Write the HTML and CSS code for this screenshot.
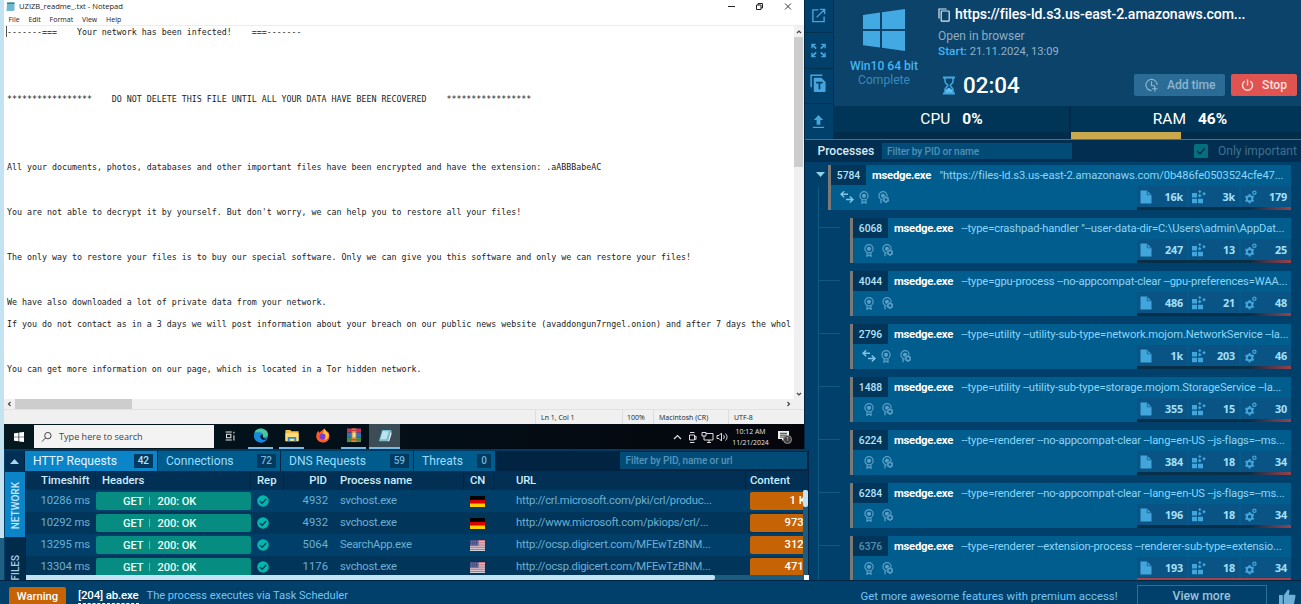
FILE: index.html
```html
<!DOCTYPE html>
<html lang="en">
<head>
<meta charset="utf-8">
<title>Task analysis</title>
<link rel="stylesheet" href="styles.css">
</head>
<body>
<svg class="defs" aria-hidden="true">
  <symbol id="i-cert" viewBox="0 0 10 13"><circle cx="5" cy="4.8" r="4.1" fill="none" stroke="currentColor" stroke-width="1.2"/><circle cx="5" cy="4.8" r="2.1" fill="currentColor"/><path d="M3 8.5V12.3L5 11L7 12.3V8.5" fill="none" stroke="currentColor" stroke-width="1.2"/></symbol>
  <symbol id="i-certgear" viewBox="0 0 12 13"><circle cx="5" cy="4.8" r="4.1" fill="none" stroke="currentColor" stroke-width="1.2"/><circle cx="5" cy="4.8" r="2.1" fill="currentColor"/><path d="M3 8.5V12.3" stroke="currentColor" stroke-width="1.3"/><circle cx="8" cy="8.6" r="3.3" fill="#005d8d"/><circle cx="8" cy="8.6" r="2.1" fill="none" stroke="currentColor" stroke-width="1.4"/><path d="M8 5.3V6.5M8 10.7V11.9M5.2 7L6.2 7.6M9.8 9.6L10.8 10.2M5.2 10.2L6.2 9.6M9.8 7.6L10.8 7" stroke="currentColor" stroke-width="1.4"/></symbol>
  <symbol id="i-net" viewBox="0 0 14 12"><path d="M4.2 .3L1 3.3L4.2 6.3M1 3.3H8M9.8 5.5L13 8.5L9.8 11.5M13 8.5H6" fill="none" stroke="currentColor" stroke-width="1.4"/></symbol>
  <symbol id="i-file" viewBox="0 0 12 14"><path d="M.5 .5H7L11.5 5V13.5H.5Z" fill="currentColor"/><path d="M7.3 .8V4.8H11.3" fill="none" stroke="#0b5485" stroke-width=".7"/></symbol>
  <symbol id="i-reg" viewBox="0 0 14 14"><path d="M0 3H5V7.5H0ZM0 8.7H5V13.3H0ZM6 8.7H11V13.3H6ZM7.7 3.8L9.6 5.7L7.7 7.6L5.8 5.7ZM7.8 0L9.4 1.6L7.8 3.2L6.2 1.6ZM12 2L13.8 3.8L12 5.6L10.2 3.8Z" fill="currentColor"/></symbol>
  <symbol id="i-gears" viewBox="0 0 12 14"><circle cx="4.6" cy="8.8" r="2.8" fill="none" stroke="currentColor" stroke-width="2"/><path d="M4.6 4V5.8M4.6 11.8V13.6M.4 6.4L2 7.3M7.2 10.3L8.8 11.2M.4 11.2L2 10.3M7.2 7.3L8.8 6.4" stroke="currentColor" stroke-width="1.8"/><circle cx="9.4" cy="2.7" r="1.6" fill="none" stroke="currentColor" stroke-width="1.3"/></symbol>
  <symbol id="i-ok" viewBox="0 0 12 12"><circle cx="6" cy="6" r="5.8" fill="#06b5ab"/><path d="M3 6.2L5.2 8.3L9.2 4" fill="none" stroke="#033f64" stroke-width="1.3"/></symbol>
  <symbol id="i-de" viewBox="0 0 15 11"><path d="M0 0H15V4H0Z" fill="#000"/><path d="M0 4H15V7.5H0Z" fill="#dc0000"/><path d="M0 7.5H15V11H0Z" fill="#ffce00"/></symbol>
  <symbol id="i-us" viewBox="0 0 15 11"><path d="M0 0H15V11H0Z" fill="#d3cfd9"/><path d="M0 .6H15M0 2.8H15M0 5H15M0 7.2H15M0 9.4H15" stroke="#bd5c68" stroke-width=".9"/><path d="M0 0H8.5V5.6H0Z" fill="#4a5184"/><path d="M1 1.5H8M1 3H8M1 4.5H8" stroke="#8c91b5" stroke-width=".5" stroke-dasharray="1 1"/></symbol>
</svg>

<div class="app">
  <div class="upper">
    <div class="edge"></div>
    <main class="left">
      <section class="vm">
        <div class="vm-title">
          <svg class="np-icon" viewBox="0 0 9 9"><path d="M1 .5H8.5V8L7.5 9H.5Z" fill="#6db9d0"/><path d="M1 .5H8.5V2H1Z" fill="#3d7f96"/></svg>
          <span class="vm-name">UZIZB_readme_.txt - Notepad</span>
          <svg class="win-ctl" viewBox="0 0 66 9"><path d="M0 4.5H7" stroke="#222"/><path d="M28.5 3H33V7.5H28.5ZM30 3V1.5H34.5V6H33" fill="none" stroke="#222"/><path d="M57 1.5L63 7.5M63 1.5L57 7.5" stroke="#222" stroke-width=".9"/></svg>
        </div>
        <div class="vm-menu"><span>File</span><span>Edit</span><span>Format</span><span>View</span><span>Help</span></div>
        <div class="vm-body">
          <div class="caret"></div>
          <pre class="note">-------===    Your network has been infected!    ===-------





*****************    DO NOT DELETE THIS FILE UNTIL ALL YOUR DATA HAVE BEEN RECOVERED    *****************





All your documents, photos, databases and other important files have been encrypted and have the extension: .aABBBabeAC



You are not able to decrypt it by yourself. But don't worry, we can help you to restore all your files!



The only way to restore your files is to buy our special software. Only we can give you this software and only we can restore your files!



We have also downloaded a lot of private data from your network.

If you do not contact as in a 3 days we will post information about your breach on our public news website (avaddongun7rngel.onion) and after 7 days the whol



You can get more information on our page, which is located in a Tor hidden network.</pre>
          <div class="vbar">
            <svg viewBox="0 0 10 11"><path d="M3 7L5 5L7 7" fill="none" stroke="#444" stroke-width="1.2"/></svg>
            <div class="vthumb"></div>
            <svg class="down" viewBox="0 0 10 11"><path d="M3 5L5 7L7 5" fill="none" stroke="#444" stroke-width="1.2"/></svg>
          </div>
        </div>
        <div class="hbar">
          <svg viewBox="0 0 11 10"><path d="M6.5 3L4.5 5L6.5 7" fill="none" stroke="#444" stroke-width="1.2"/></svg>
          <div class="hthumb"></div>
          <svg class="right" viewBox="0 0 11 10"><path d="M4.5 3L6.5 5L4.5 7" fill="none" stroke="#444" stroke-width="1.2"/></svg>
        </div>
        <div class="vm-status"><span class="s1">Ln 1, Col 1</span><span class="s2">100%</span><span class="s3">Macintosh (CR)</span><span class="s4">UTF-8</span></div>
        <div class="taskbar">
          <div class="tb-start"><svg viewBox="0 0 10 10"><path d="M0 1.3L4.5 .7V4.7H0ZM5.2 .6L10 0V4.7H5.2ZM0 5.3H4.5V9.3L0 8.7ZM5.2 5.3H10V10L5.2 9.4Z" fill="#fff"/></svg></div>
          <div class="tb-search"><svg viewBox="0 0 12 12"><circle cx="7.5" cy="4.5" r="3.5" fill="none" stroke="#333"/><path d="M5 7L1 11" stroke="#333"/></svg><span>Type here to search</span></div>
          <div class="tb-app"><svg class="tv" viewBox="0 0 16 16"><path d="M3 3.5H10M3 12.5H10M4 6H9V10H4ZM12.5 3V5M12.5 7V13" fill="none" stroke="#e8e8e8" stroke-width="1.2"/></svg></div>
          <div class="tb-app on"><svg viewBox="0 0 16 16"><circle cx="8" cy="8" r="7.6" fill="#1679cf"/><path d="M1 5C3-1 13-1 15.2 5.5C16 10 12 10.500 10 9C9 6 5 4 1 5Z" fill="#43c99a"/><path d="M.5 8C1 4 9 3 10 7C7 7 6 10 9 12C11 13 13 12.500 14.500 11.500C11 18 .5 16 .5 8Z" fill="#1589dc"/><path d="M10 7C7 7 6.500 10 9 12C11 13 13 12.500 14.500 11.500C12 12 10 11 9.800 9Z" fill="#03101c"/></svg></div>
          <div class="tb-app on"><svg viewBox="0 0 16 16"><path d="M1 2H6L7.500 3.500H15V14H1Z" fill="#f2c14b"/><path d="M1 5.500H15V14H1Z" fill="#fbdc7a"/><path d="M3.500 9.500H12.500V14H10.500V11.500H5.500V14H3.500Z" fill="#2d8cd0"/></svg></div>
          <div class="tb-app"><svg viewBox="0 0 16 16"><path d="M8 15.500C3 15.500 .5 12 .8 8C1 5.500 2 4 3 2.800L4 5C6 2.500 8 3 9 .5C11 2 11 3.500 12 4.500L13 3.500C17 9 14 15.500 8 15.500Z" fill="#fb5b27"/><path d="M9 .5C11 2 12 4.500 14 6C15 10 12 13 9 12C12 9 9 6 7 6C9 4 9 2 9 .5Z" fill="#ffbe2e"/><circle cx="7.500" cy="9" r="3.200" fill="#7a3bd0"/></svg></div>
          <div class="tb-app on"><svg viewBox="0 0 16 16"><path d="M.5 .5H15.500V5H.5Z" fill="#a53a7b"/><path d="M.5 5H15.500V10H.5Z" fill="#3671b4"/><path d="M.5 10H15.500V15H.5Z" fill="#3b9a4d"/><path d="M5.500 .5H10.500V15H5.500Z" fill="#d48a38"/><path d="M6.500 5H9.500V10H6.500Z" fill="#f5dc9c"/><path d="M.5 2.500H15.500M.5 12.500H15.500" stroke="#cc3440" stroke-width="1.200"/></svg></div>
          <div class="tb-app on sel"><svg viewBox="0 0 16 16"><path d="M5 2H14.500L11 14H1.500Z" fill="#78bed0"/><path d="M5.500 3.500H12L9.500 12H3Z" fill="#bce4ec"/><path d="M11 14L14.500 2L15 6L12.500 14Z" fill="#e8f4f6"/></svg></div>
          <div class="tray">
            <svg viewBox="0 0 60 14"><path d="M2 9L5.500 5.500L9 9" fill="none" stroke="#ddd" stroke-width="1.200"/><path d="M17.500 5H22.500V10H17.500ZM22.500 7L24 6V9.500L22.500 8.500M18 2.500H22.500M18 12.500H22.500" fill="none" stroke="#ddd"/><path d="M30 2.500H34V6H30ZM34 3.500H41V10H32V6M35 12.500H39M37 10V12" fill="none" stroke="#ddd"/><path d="M45 5.500H47L49.500 3V11L47 8.500H45ZM51.500 5C52.500 6 52.500 8 51.500 9M53.500 3.500C55.500 5.500 55.500 8.500 53.500 10.500" fill="none" stroke="#ddd"/></svg>
            <div class="clock"><span>10:12 AM</span><span>11/21/2024</span></div>
            <div class="action"><svg viewBox="0 0 12 12"><path d="M0 0H11V8H6L4 10V8H0Z" fill="#eee"/><path d="M2 2.300H9M2 4.200H9M2 6.100H9" stroke="#111" stroke-width=".8"/></svg><span>1</span></div>
          </div>
        </div>
      </section>

      <section class="net">
        <div class="tabs">
          <div class="fold"><svg viewBox="0 0 9 5"><path d="M0 5L4.500 0L9 5Z" fill="#a8d8f5"/></svg></div>
          <div class="tab t1 active"><span>HTTP Requests</span><b>42</b></div>
          <div class="tab t2"><span>Connections</span><b>72</b></div>
          <div class="tab t3"><span>DNS Requests</span><b>59</b></div>
          <div class="tab t4"><span>Threats</span><b>0</b></div>
          <div class="net-filter">Filter by PID, name or url</div>
        </div>
        <div class="net-body">
          <div class="side"><div class="side-tab cur"><span>NETWORK</span></div><div class="side-tab"><span>FILES</span></div></div>
          <div class="table">
            <div class="row head"><span class="c-time">Timeshift</span><span class="c-head">Headers</span><span class="c-rep">Rep</span><span class="c-pid">PID</span><span class="c-proc">Process name</span><span class="c-cn">CN</span><span class="c-url">URL</span><span class="c-cont">Content</span></div>
            <div class="scroller">
              <div class="rows">
                <div class="row"><span class="c-time">10286 ms</span><span class="c-head"><span class="pill"><i>GET</i><em></em><i>200: OK</i></span></span><span class="c-rep"><svg><use href="#i-ok"/></svg></span><span class="c-pid">4932</span><span class="c-proc">svchost.exe</span><span class="c-cn"><svg><use href="#i-de"/></svg></span><span class="c-url">http://crl.microsoft.com/pki/crl/produc...</span><span class="c-cont"><span class="size kb">1 K</span></span></div>
                <div class="row alt"><span class="c-time">10292 ms</span><span class="c-head"><span class="pill"><i>GET</i><em></em><i>200: OK</i></span></span><span class="c-rep"><svg><use href="#i-ok"/></svg></span><span class="c-pid">4932</span><span class="c-proc">svchost.exe</span><span class="c-cn"><svg><use href="#i-de"/></svg></span><span class="c-url">http://www.microsoft.com/pkiops/crl/...</span><span class="c-cont"><span class="size">973</span></span></div>
                <div class="row"><span class="c-time">13295 ms</span><span class="c-head"><span class="pill"><i>GET</i><em></em><i>200: OK</i></span></span><span class="c-rep"><svg><use href="#i-ok"/></svg></span><span class="c-pid">5064</span><span class="c-proc">SearchApp.exe</span><span class="c-cn"><svg><use href="#i-us"/></svg></span><span class="c-url">http://ocsp.digicert.com/MFEwTzBNM...</span><span class="c-cont"><span class="size">312</span></span></div>
                <div class="row alt"><span class="c-time">13304 ms</span><span class="c-head"><span class="pill"><i>GET</i><em></em><i>200: OK</i></span></span><span class="c-rep"><svg><use href="#i-ok"/></svg></span><span class="c-pid">1176</span><span class="c-proc">svchost.exe</span><span class="c-cn"><svg><use href="#i-us"/></svg></span><span class="c-url">http://ocsp.digicert.com/MFEwTzBNM...</span><span class="c-cont"><span class="size">471</span></span></div>
              </div>
              <div class="track-v"><div></div></div>
            </div>
            <div class="track-h"><div class="h-thumb"></div><div class="corner"></div></div>
          </div>
        </div>
      </section>
    </main>

    <aside class="right-panel">
      <div class="overview">
        <div class="tools">
          <div><svg viewBox="0 0 16 16"><path d="M8 2H2V14.500H14V9M9.500 1.500H14.500V6.500M14.500 1.500L6 10" fill="none" stroke="#45a5dc" stroke-width="1.500"/></svg></div>
          <div><svg viewBox="0 0 16 16"><path d="M1 5.500V1.500H5M11 1.500H15V5.500M1 10.500V14.500H5M11 14.500H15V10.500" fill="none" stroke="#45a5dc" stroke-width="1.500"/><path d="M1.500 2L5.500 6M14.500 2L10.500 6M1.500 14L5.500 10M14.500 14L10.500 10" stroke="#45a5dc" stroke-width="2"/></svg></div>
          <div><svg class="big" viewBox="0 0 18 20"><path d="M1.200 14V1.200H13" fill="none" stroke="#45a5dc" stroke-width="1.600"/><path d="M4 5Q4 4 5 4H12L16.500 8.500V18Q16.500 19 15.500 19H5Q4 19 4 18Z" fill="#45a5dc"/><path d="M6.500 9H13.500M10 9V16" stroke="#004068" stroke-width="1.800"/></svg></div>
          <div><svg viewBox="0 0 14 16"><path d="M7 1L12 6.500H9V11.500H5V6.500H2Z" fill="#45a5dc"/><path d="M1 14.300H13" stroke="#45a5dc" stroke-width="1.300"/></svg></div>
        </div>
        <div class="info-col">
          <div class="info">
            <div class="os">
              <svg viewBox="0 0 42 42"><path d="M0 6L17 3.600V20H0ZM19 3.300L42 0V20H19ZM0 22H17V38.500L0 36.200ZM19 22H42V42L19 38.800Z" fill="#42a9e2"/></svg>
              <div class="os-name">Win10 64 bit</div>
              <div class="os-state">Complete</div>
            </div>
            <div class="task">
              <div class="task-url"><svg viewBox="0 0 12 14"><path d="M1 10.500V1H8.500" fill="none" stroke="#dcecf6" stroke-width="1.200"/><rect x="3.200" y="3" width="8" height="10.200" rx=".8" fill="none" stroke="#dcecf6" stroke-width="1.200"/></svg><span>https://files-ld.s3.us-east-2.amazonaws.com...</span></div>
              <div class="task-open">Open in browser</div>
              <div class="task-start"><b>Start:</b> 21.11.2024, 13:09</div>
              <div class="task-ctl">
                <svg class="glass" viewBox="0 0 12 18"><path d="M0 1H12M0 17H12" stroke="#42a9e2" stroke-width="2"/><path d="M2 1.500V5C2 7 4.800 8 4.800 9S2 11 2 13V16.500H10V13C10 11 7.200 10 7.200 9S10 7 10 5V1.500" fill="none" stroke="#42a9e2" stroke-width="1.500"/><path d="M2.500 16V13.500L6 11L9.500 13.500V16Z" fill="#5bc0f5"/></svg>
                <span class="timer">02:04</span>
                <div class="btn add"><svg viewBox="0 0 15 15"><path d="M13 7A6 6 0 1 0 7 13" fill="none" stroke="#8cb4cd" stroke-width="1.300"/><path d="M7 3V7.500L10.500 8M10.500 8V14M7.500 11H13.500" fill="none" stroke="#8cb4cd" stroke-width="1.300"/></svg><span>Add time</span></div>
                <div class="btn stop"><svg viewBox="0 0 14 14"><path d="M4 2.300A5.400 5.400 0 1 0 10 2.300M7 .5V7" fill="none" stroke="#ffd9d9" stroke-width="1.500"/></svg><span>Stop</span></div>
              </div>
            </div>
          </div>
          <div class="meters">
            <div class="meter cpu"><p>CPU<b>0%</b></p><div class="load"></div></div>
            <div class="meter ram"><p>RAM<b>46%</b></p><div class="load"><div></div></div></div>
          </div>
        </div>
      </div>
      <div class="proc-head"><span class="ttl">Processes</span><div class="proc-filter">Filter by PID or name</div><svg viewBox="0 0 14 14"><rect width="14" height="14" rx="1.500" fill="#056f80"/><path d="M3 7L6 9.800L11 4.300" fill="none" stroke="#022e51" stroke-width="1.500"/></svg><span class="imp">Only important</span></div>
      <div class="procs">
        <div class="parent">
          <svg class="open" viewBox="0 0 9 5"><path d="M0 0H9L4.500 5Z" fill="#8ed4e8"/></svg>
          <div class="proc"><div class="p-top"><span class="pid">5784</span><b>msedge.exe</b><span class="cmd q">"https://files-ld.s3.us-east-2.amazonaws.com/0b486fe0503524cfe47...</span></div><div class="p-bot"><svg class="n"><use href="#i-net"/></svg><svg class="c"><use href="#i-cert"/></svg><svg class="g"><use href="#i-certgear"/></svg><div class="stats"><div><svg><use href="#i-file"/></svg>16k</div><div><svg><use href="#i-reg"/></svg>3k</div><div><svg><use href="#i-gears"/></svg>179</div></div></div></div>
        </div>
        <div class="kids">
          <div class="kid"><div class="proc"><div class="p-top"><span class="pid">6068</span><b>msedge.exe</b><span class="cmd k1">--type=crashpad-handler "--user-data-dir=C:\Users\admin\AppDat...</span></div><div class="p-bot"><svg class="c"><use href="#i-cert"/></svg><svg class="g"><use href="#i-certgear"/></svg><div class="stats"><div><svg><use href="#i-file"/></svg>247</div><div><svg><use href="#i-reg"/></svg>13</div><div><svg><use href="#i-gears"/></svg>25</div></div></div></div></div>
          <div class="kid"><div class="proc"><div class="p-top"><span class="pid">4044</span><b>msedge.exe</b><span class="cmd k2">--type=gpu-process --no-appcompat-clear --gpu-preferences=WAA...</span></div><div class="p-bot"><svg class="c"><use href="#i-cert"/></svg><svg class="g"><use href="#i-certgear"/></svg><div class="stats"><div><svg><use href="#i-file"/></svg>486</div><div><svg><use href="#i-reg"/></svg>21</div><div><svg><use href="#i-gears"/></svg>48</div></div></div></div></div>
          <div class="kid"><div class="proc"><div class="p-top"><span class="pid">2796</span><b>msedge.exe</b><span class="cmd k3">--type=utility --utility-sub-type=network.mojom.NetworkService --la...</span></div><div class="p-bot"><svg class="n"><use href="#i-net"/></svg><svg class="c"><use href="#i-cert"/></svg><svg class="g"><use href="#i-certgear"/></svg><div class="stats"><div><svg><use href="#i-file"/></svg>1k</div><div><svg><use href="#i-reg"/></svg>203</div><div><svg><use href="#i-gears"/></svg>46</div></div></div></div></div>
          <div class="kid"><div class="proc"><div class="p-top"><span class="pid">1488</span><b>msedge.exe</b><span class="cmd k4">--type=utility --utility-sub-type=storage.mojom.StorageService --la...</span></div><div class="p-bot"><svg class="c"><use href="#i-cert"/></svg><svg class="g"><use href="#i-certgear"/></svg><div class="stats"><div><svg><use href="#i-file"/></svg>355</div><div><svg><use href="#i-reg"/></svg>15</div><div><svg><use href="#i-gears"/></svg>30</div></div></div></div></div>
          <div class="kid"><div class="proc"><div class="p-top"><span class="pid">6224</span><b>msedge.exe</b><span class="cmd k5">--type=renderer --no-appcompat-clear --lang=en-US --js-flags=--ms...</span></div><div class="p-bot"><svg class="c"><use href="#i-cert"/></svg><svg class="g"><use href="#i-certgear"/></svg><div class="stats"><div><svg><use href="#i-file"/></svg>384</div><div><svg><use href="#i-reg"/></svg>18</div><div><svg><use href="#i-gears"/></svg>34</div></div></div></div></div>
          <div class="kid"><div class="proc"><div class="p-top"><span class="pid">6284</span><b>msedge.exe</b><span class="cmd k5">--type=renderer --no-appcompat-clear --lang=en-US --js-flags=--ms...</span></div><div class="p-bot"><svg class="c"><use href="#i-cert"/></svg><svg class="g"><use href="#i-certgear"/></svg><div class="stats"><div><svg><use href="#i-file"/></svg>196</div><div><svg><use href="#i-reg"/></svg>18</div><div><svg><use href="#i-gears"/></svg>34</div></div></div></div></div>
          <div class="kid"><div class="proc"><div class="p-top"><span class="pid dim">6376</span><b>msedge.exe</b><span class="cmd k6">--type=renderer --extension-process --renderer-sub-type=extensio...</span></div><div class="p-bot"><svg class="c"><use href="#i-cert"/></svg><svg class="g"><use href="#i-certgear"/></svg><div class="stats hot"><div><svg><use href="#i-file"/></svg>193</div><div><svg><use href="#i-reg"/></svg>18</div><div><svg><use href="#i-gears"/></svg>34</div></div></div></div></div>
        </div>
      </div>
    </aside>
  </div>

  <footer class="foot">
    <span class="warn">Warning</span>
    <span class="f-proc">[204] ab.exe</span>
    <span class="f-msg">The process executes via Task Scheduler</span>
    <span class="f-promo">Get more awesome features with premium access!</span>
    <span class="f-more">View more</span>
    <svg class="thumb" viewBox="0 0 18 16"><path d="M0 6H4V16H0ZM5 6.500L9.500 0Q11.500 .5 11 2.500L10.300 5.500H16Q17.500 5.500 17.500 7L16 14.500Q15.700 16 14 16H5Z" fill="#6fb0d8"/></svg>
  </footer>
</div>
</body>
</html>
```

FILE: styles.css
```css
* { box-sizing: border-box; }
body { margin: 0; font-family: Roboto, sans-serif; font-size: 12px; background: #00406b; overflow: hidden; }
svg { display: block; flex: none; }
.defs { position: absolute; width: 0; height: 0; }
i, em { font-style: normal; }
p { margin: 0; }

.app { width: 1301px; height: 604px; display: flex; flex-direction: column; overflow: hidden; }
.upper { display: flex; height: 580px; overflow: hidden; background: #00406a; }
.edge { width: 4px; background: linear-gradient(#c3e3f3 538px, #1f5f82 538px); }
.left { width: 801px; position: relative; z-index: 1; }

/* remote desktop */
.vm { height: 449px; border-right: 1px solid #022742; background: #fff; display: flex; flex-direction: column; font-family: "Open Sans", "Noto Sans", sans-serif; color: #222; }
.vm-title { height: 13px; display: flex; align-items: center; padding-left: 2px; }
.np-icon { width: 9px; height: 9px; margin-right: 4px; }
.vm-name { font-size: 7.6px; width: 110px; line-height: 13px; white-space: nowrap; }
.win-ctl { width: 66px; height: 9px; margin-left: auto; margin-right: 10px; }
.vm-menu { height: 13px; display: flex; gap: 8.8px; padding-left: 4.5px; font-size: 7px; line-height: 13px; border-bottom: 1px solid #ededed; }
.vm-body { height: 373px; display: flex; }
.caret { width: 1px; height: 11px; margin-left: 2px; background: #555; }
.note { margin: 0; flex: 1; min-width: 0; padding-top: 1px; font: 8.3px/11.24px "DejaVu Sans Mono", monospace; letter-spacing: -0.002px; color: #222; overflow: hidden; text-indent: 0; }
.vbar { width: 10px; background: #f0f0f0; display: flex; flex-direction: column; }
.vbar svg { width: 10px; height: 11px; }
.vthumb { height: 130px; background: #cdcdcd; margin-right: 1px; }
.vbar .down { margin-top: auto; }
.hbar { height: 11px; background: #f0f0f0; display: flex; align-items: flex-start; border-bottom: 1px solid #e2e2e2; }
.hbar svg { width: 11px; height: 10px; }
.hbar .right { margin-left: auto; margin-right: 10px; }
.hthumb { width: 117px; height: 10px; background: #cdcdcd; }
.vm-status { height: 14px; background: #f0f0f0; display: flex; justify-content: flex-end; font-size: 7px; line-height: 15px; }
.vm-status span { border-left: 1px solid #ddd; padding-left: 5px; }
.s1 { width: 87px; }
.vm-status .s2 { width: 31px; padding-left: 4px; }
.s3 { width: 75px; letter-spacing: .05px; }
.s4 { width: 76px; }
.taskbar { height: 25px; background: linear-gradient(90deg, #04191f, #031019 40%, #05060c); display: flex; }
.tb-start { width: 30px; display: flex; align-items: center; justify-content: center; }
.tb-start svg { width: 10px; height: 10px; }
.tb-search { width: 180px; margin: 1px 0; background: #f3f3f3; display: flex; align-items: center; padding-left: 7px; font-size: 9.1px; color: #444; }
.tb-search svg { width: 11px; height: 12px; margin-right: 7px; }
.tb-app { width: 31px; display: flex; align-items: center; justify-content: center; border-bottom: 2px solid transparent; }
.tb-app svg { width: 16px; height: 15px; }
.tb-app .tv { width: 14px; height: 14px; }
.tb-app.on { border-image: linear-gradient(90deg, transparent 3px, #78b9e6 3px, #78b9e6 28px, transparent 28px) 0 0 2 0; }
.tb-app.sel { background: #3b4c56; border-image: linear-gradient(#78b9e6, #78b9e6) 0 0 2 0; }
.tray { flex: 1; display: flex; justify-content: flex-end; align-items: center; color: #e4e4e4; }
.tray > svg { width: 60px; height: 14px; }
.clock { width: 37px; font-size: 6.9px; line-height: 11px; display: flex; flex-direction: column; text-align: center; align-items: center; }
.action { width: 35px; padding-left: 9px; position: relative; }
.action svg { width: 12px; height: 12px; }
.action span { position: absolute; left: 14px; top: 4px; width: 9px; height: 9px; border-radius: 50%; background: #3c3c3c; border: 1px solid #999; font-size: 6px; line-height: 7px; text-align: center; }

/* network panel */
.net { box-sizing: content-box; height: 129px; margin-left: 1px; margin-right: -4px; border-top: 2px solid #013a63; background: #012443; border-right: 1px solid #012443; }
.tabs { height: 20px; display: flex; gap: 1px; background: #012443; color: #9cdcff; }
.fold { width: 19px; background: #013054; display: flex; align-items: center; justify-content: center; }
.fold svg { width: 9px; height: 5px; }
.tab { display: flex; align-items: center; justify-content: space-between; background: #005c8c; padding: 0 4px 0 8px; font-size: 12.1px; }
.tab b { height: 14px; min-width: 14px; padding: 0 4px; background: #02395f; font-weight: 500; font-size: 10px; line-height: 14px; color: #6fb4dd; text-align: center; }
.t1 { width: 132px; } .t2 { width: 122px; } .t3 { width: 132px; } .t4 { width: 81px; }
.active { background: #0c85c8; color: #e3f6ff; }
.active b { color: #b9e2fa; min-width: 19px; }
.net-filter { width: 187px; height: 17px; margin: 1px 1px 0 auto; background: #024b76; padding-left: 5.5px; line-height: 18px; font-size: 10.1px; letter-spacing: -.12px; color: #5494bc; font-weight: 500; }
.net-body { display: flex; height: 109px; }
.side { width: 20px; margin-right: 1px; display: flex; flex-direction: column; background: #012a4b; }
.side-tab { flex: 1; display: flex; align-items: center; justify-content: center; color: #a9cfe5; font-size: 10px; font-weight: 500; overflow: hidden; padding-top: 19px; }
.side-tab.cur { flex: none; height: 66px; background: #0c85c8; color: #c3e7fb; padding-top: 2px; border-top: 1px solid #013054; }
.side-tab span { writing-mode: vertical-rl; transform: rotate(180deg); white-space: nowrap; }
.table { flex: 1; min-width: 0; }
.row { display: grid; grid-template-columns: 70px 155px 33px 56px 124px 30px 252px 63px; height: 22px; line-height: 21px; background: #003f69; color: #6cb0d4; white-space: nowrap; }
.row.alt { background: #02355a; }
.row.head { height: 19px; line-height: 20px; background: #013054; color: #cdeeff; font-weight: 500; font-size: 11.3px; overflow: hidden; }
.head > span { border-right: 1px solid #012443; }
.head > span:last-child { border: 0; }
.c-time { text-align: right; padding-right: 6px; letter-spacing: -.1px; }
.head .c-time { letter-spacing: 0; padding-right: 5.5px; }
.head .c-head { padding-left: 6px; }
.c-pid { text-align: right; padding-right: 12px; }
.c-proc { letter-spacing: -.27px; }
.head .c-proc { letter-spacing: 0; }
.c-url { padding-left: 22px; letter-spacing: -.23px; }
.c-cont { padding-left: 4px; overflow: hidden; }
.c-cn { padding-left: 6px; }
.c-rep { padding-left: 6px; }
.scroller { display: flex; height: 85px; overflow: hidden; }
.rows { width: 778px; overflow: hidden; font-size: 11.3px; }
.row svg { width: 12px; height: 12px; margin-top: 5px; }
.row .c-cn svg { width: 15px; height: 11px; margin-top: 6px; }
.pill { display: flex; align-items: center; height: 18px; margin-top: 2px; padding-left: 27px; border-radius: 2px; background: #068c80; color: #eafff9; font-weight: 500; font-size: 11.1px; letter-spacing: -.08px; }
.pill em { width: 1px; height: 8px; background: #5dc4b8; margin: 0 7px 0 6px; }
.size { display: block; height: 18px; width: 70px; margin-top: 2px; padding-left: 34.5px; line-height: 18px; border-radius: 2px; background: #c66305; color: #fff; font-size: 11.3px; font-weight: 500; }
.size.kb { padding-left: 39.5px; }
.track-v { width: 5px; background: #1b5c80; }
.track-v div { height: 17px; background: #c3e3f3; border-radius: 2px; }
.track-h { height: 5px; width: 783px; background: #1b5c80; display: flex; justify-content: space-between; }
.h-thumb { width: 689px; background: #c3e3f3; border-radius: 0 2px 2px 0; }
.corner { width: 5px; background: #fff; }

/* right panel */
.right-panel { width: 496px; background: #00406a; }
.overview { display: flex; height: 140px; border-bottom: 1px solid #30799f; }
.tools { width: 29px; border-right: 1px solid #03304f; display: flex; flex-direction: column; }
.tools div { height: 35px; border-bottom: 1px solid #02304f; display: flex; align-items: center; justify-content: center; padding-right: 1px; }
.tools div:first-child { height: 33px; padding-bottom: 2px; }
.tools div:nth-child(2) { height: 36px; }
.tools div:last-child { border: 0; height: 35px; }
.tools svg { width: 15px; height: 15px; }
.tools .big { width: 17px; height: 19px; margin-top: -6px; }
.info-col { flex: 1; }
.info { height: 106px; display: flex; background: #0c436a; }
.os { width: 100px; display: flex; flex-direction: column; align-items: center; padding-top: 9px; }
.os svg { width: 42px; height: 42px; }
.os-name { font-size: 12.1px; font-weight: 500; color: #42b5f5; line-height: 15px; margin-top: 8px; }
.os-state { font-size: 12.1px; color: #378abc; line-height: 14px; margin-top: -1px; }
.task { flex: 1; padding: 5px 4px 0 4px; }
.task-url { display: flex; align-items: center; gap: 5px; height: 17px; font-size: 14.1px; letter-spacing: -.09px; font-weight: 500; color: #fff; white-space: nowrap; }
.task-url svg { width: 12px; height: 14px; margin-top: 2px; }
.task-open { margin-top: 7px; font-size: 12px; line-height: 15px; color: #8fadc2; }
.task-start { font-size: 11.2px; line-height: 15px; color: #8fb2cb; }
.task-start b { font-weight: 500; color: #42b5f5; font-size: 11.8px; }
.task-ctl { display: flex; align-items: center; height: 22px; margin-top: 15px; }
.glass { width: 12px; height: 19px; margin-left: 5px; }
.timer { width: 179px; padding-left: 8px; font-size: 22.4px; font-weight: 500; color: #fff; line-height: 22px; }
.btn { height: 22px; border-radius: 2px; display: flex; align-items: center; font-size: 12.2px; }
.add { width: 91px; padding-left: 11px; background: #2a6c96; color: #8cb4cd; font-weight: 500; letter-spacing: -.1px; }
.add svg { width: 14px; height: 15px; margin-right: 8px; }
.stop { width: 66px; margin-left: 6px; padding-left: 10px; background: #df5350; color: #ffe0df; font-weight: 500; }
.stop svg { width: 13px; height: 13px; margin-right: 8px; }
.meters { display: flex; height: 33px; }
.meter p { height: 26px; line-height: 26px; background: #013557; color: #fff; font-size: 15.5px; text-align: center; }
.meter b { margin-left: 12px; font-weight: 700; }
.cpu { width: 237px; border-right: 2px solid #02294a; }
.ram { flex: 1; }
.ram p { text-indent: 8px; }
.load { height: 7px; background: #022c49; }
.load div { width: 110px; height: 7px; background: #cba84d; }
.proc-head { height: 22px; background: #022e51; display: flex; align-items: center; padding-left: 12.5px; }
.ttl { width: 64.5px; font-size: 12.1px; font-weight: 500; color: #d7e9f4; }
.proc-filter { width: 190px; height: 16px; background: #024b76; color: #5090b8; font-size: 10.1px; letter-spacing: -.1px; font-weight: 500; line-height: 17px; padding-left: 5px; }
.proc-head svg { width: 14px; height: 14px; margin-left: 122px; }
.imp { margin-left: 10px; font-size: 12px; color: #40708f; white-space: nowrap; }
.procs { padding-top: 3px; height: 418px; overflow: hidden; }
.parent { display: flex; padding-right: 10px; }
.open { width: 9px; height: 5px; margin: 7px 3px 0 11px; }
.proc { flex: 1; min-width: 0; height: 45px; border-left: 3px solid #7c7975; background: #005d8d; }
.p-top { display: flex; height: 20px; line-height: 21px; white-space: nowrap; }
.pid { width: 35px; height: 20px; background: #01355a; color: #b5e3fa; font-size: 10.3px; text-align: center; font-weight: 500; }
.pid.dim { color: #5b8fae; }
.p-top b { margin-left: 6px; width: 67.5px; font-size: 11.3px; letter-spacing: -.27px; font-weight: 700; color: #fff; }
.cmd { font-size: 11.2px; color: #8dd5fb; letter-spacing: -.12px; }
.k2 { letter-spacing: -.11px; }
.k3 { letter-spacing: -.1px; }
.p-bot { display: flex; height: 25px; padding-left: 10px; color: #5ca0c8; }
.p-bot > svg { margin-top: 5.5px; }
.p-bot .n { width: 14px; height: 12px; margin: 6px 6px 0 -1px; color: #86c4e4; }
.p-bot .c { width: 10px; height: 13px; margin-left: 1px; margin-right: 8px; }
.p-bot .n + .c { margin-left: -1px; margin-right: 9px; }
.p-bot .g { width: 12px; height: 13px; }
.stats { margin-left: auto; width: 154px; display: flex; gap: 2px; padding-top: 1px; border-bottom: 3px solid; border-image: linear-gradient(90deg, #082f48 73%, #9b424d) 1; border-width: 0 0 3px; }
.stats.hot { border-image: linear-gradient(#a2454f, #a2454f) 1; }
.stats div { width: 50px; background: #0a5485; color: #a5e0fb; font: bold 10.8px/21px "Noto Sans", sans-serif; letter-spacing: -.15px; display: flex; align-items: center; justify-content: space-between; padding: 0 4px 0 3px; }
.stats svg { width: 12px; height: 14px; color: #42a5dc; }
.stats div:nth-child(2) svg { width: 14px; }
.stats div:nth-child(3) { padding-left: 4px; }
.kids { margin-left: 13px; border-left: 1px solid #0d5a84; height: 500px; margin-top: -23px; padding-top: 31px; }
.kid { display: flex; height: 45px; margin-bottom: 8px; padding-right: 10px; }
.kid::before { content: ""; width: 21px; height: 1px; margin: 9px 10px 0 0; background: #0d5a84; }

/* footer */
.foot { height: 24px; background: #00406b; border-top: 1px solid #012443; display: flex; align-items: flex-start; padding: 6px 0 0 9px; line-height: 18px; white-space: nowrap; }
.warn { width: 57px; height: 20px; background: #c66305; color: #fff; border-radius: 2px; text-align: center; font-weight: 500; font-size: 11.2px; line-height: 19px; }
.f-proc { margin-left: 12px; color: #fff; font-weight: 500; font-size: 11.5px; letter-spacing: -.17px; line-height: 16px; border-bottom: 1px dashed #fff; }
.f-msg { margin-left: 8px; color: #74c4f3; font-size: 11.2px; letter-spacing: -.07px; line-height: 17px; width: 714px; }
.f-promo { font-size: 11.4px; line-height: 19px; color: #74c4f3; width: 276px; }
.f-more { width: 130px; height: 24px; margin-top: -2px; border: 1px solid #2c6f98; text-align: center; color: #9cc3dc; font-size: 12.2px; font-weight: 500; line-height: 20px; }
.thumb { width: 17px; height: 16px; margin: 2px 0 0 12px; }
```
